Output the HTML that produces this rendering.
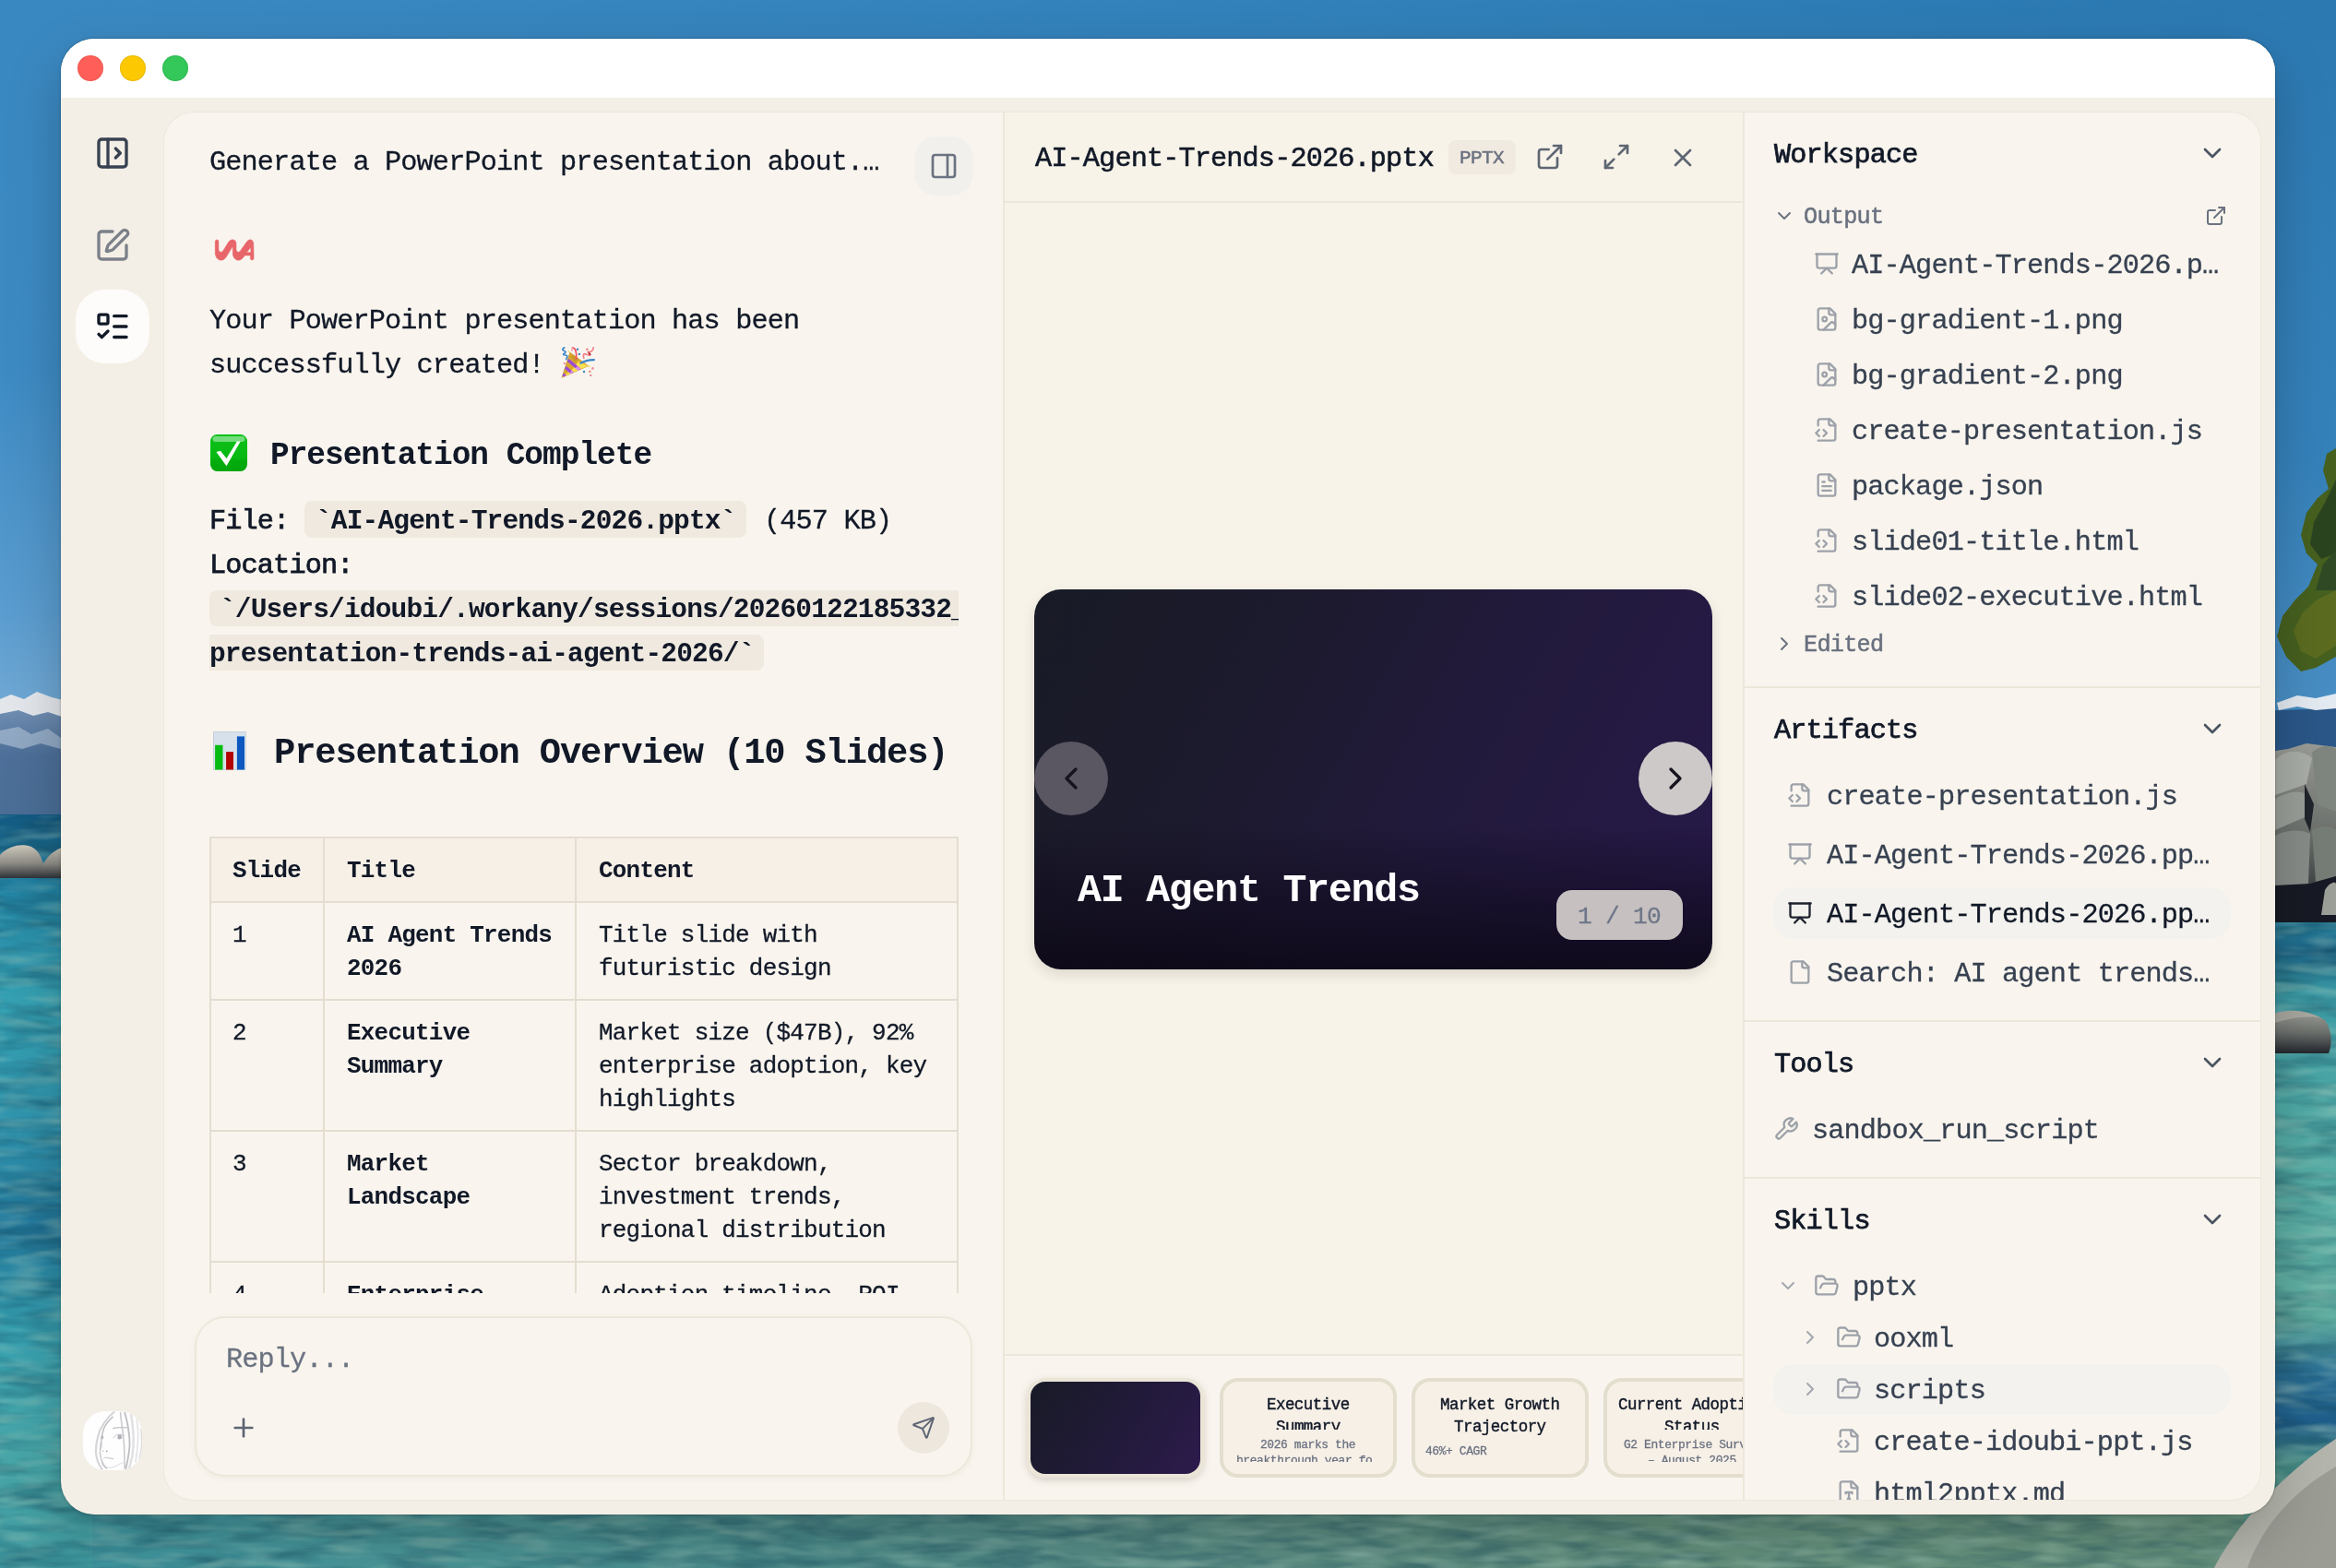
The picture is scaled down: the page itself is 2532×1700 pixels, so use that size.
<!DOCTYPE html>
<html><head><meta charset="utf-8"><title>WorkAny</title>
<style>
html,body{margin:0;padding:0;}
body{width:2532px;height:1700px;overflow:hidden;position:relative;background:#3a86bf;font-family:"Liberation Mono",monospace;}
.t{position:absolute;white-space:pre;font-family:"Liberation Mono",monospace;}
.b{position:absolute;box-sizing:border-box;}
.ic{position:absolute;overflow:visible;}
.s{position:absolute;font-family:"Liberation Sans",sans-serif;white-space:pre;}
#wall{position:absolute;left:0;top:0;width:2532px;height:1700px;background:linear-gradient(90deg,#3b88c1,#2c79b2);}
#win{background:#f4efe6;border-radius:36px;box-shadow:0 24px 60px rgba(0,0,0,.22),0 0 3px rgba(0,0,0,.3);}
#slide{border-radius:29px;background:linear-gradient(180deg,rgba(14,9,26,0) 62%,rgba(14,9,26,.55) 82%,rgba(13,9,24,.92) 100%),linear-gradient(118deg,#191b26 0%,#1c1a2d 30%,#221a3c 60%,#27194a 100%);box-shadow:0 6px 14px rgba(60,40,20,.13);}
.thumb{border-radius:20px;border:4px solid #e4decf;background:#f7f0e7;}
.thumb.sel{border:4px solid #ebe5d8;background:linear-gradient(120deg,#191b27 0%,#221a3a 55%,#2d1b4c 100%);box-shadow:0 3px 8px rgba(60,40,20,.18);border-radius:20px;}
.t{will-change:transform;}

</style></head>
<body>
<div id="wall"></div>
<svg class="ic" style="left:0;top:0" width="2532" height="1700" viewBox="0 0 2532 1700">
<defs>
<linearGradient id="skyL" x1="0" y1="0" x2="0" y2="1"><stop offset="0" stop-color="#3a88c1"/><stop offset=".45" stop-color="#3d8ac3"/><stop offset=".75" stop-color="#5a9ccf"/><stop offset="1" stop-color="#8ab6da"/></linearGradient>
<linearGradient id="skyR" x1="0" y1="0" x2="0" y2="1"><stop offset="0" stop-color="#2c79b2"/><stop offset=".6" stop-color="#3581ba"/><stop offset="1" stop-color="#4d91c6"/></linearGradient>
<linearGradient id="skyT" x1="0" y1="0" x2="1" y2="0"><stop offset="0" stop-color="#3b89c2"/><stop offset=".5" stop-color="#3382bb"/><stop offset="1" stop-color="#2b78b1"/></linearGradient>
<linearGradient id="mtn" x1="0" y1="0" x2="0" y2="1"><stop offset="0" stop-color="#7d9abb"/><stop offset=".5" stop-color="#4d6f99"/><stop offset="1" stop-color="#4a6e96"/></linearGradient>
<linearGradient id="watL" x1="0" y1="0" x2="0" y2="1"><stop offset="0" stop-color="#135c86"/><stop offset=".04" stop-color="#1a6c92"/><stop offset=".1" stop-color="#2384a4"/><stop offset=".25" stop-color="#36a2b3"/><stop offset=".42" stop-color="#2f93ad"/><stop offset=".55" stop-color="#22789c"/><stop offset=".68" stop-color="#36a0b0"/><stop offset=".85" stop-color="#48a6a8"/><stop offset="1" stop-color="#3f9aa0"/></linearGradient>
<linearGradient id="watR" x1="0" y1="0" x2="0" y2="1"><stop offset="0" stop-color="#2a86a0"/><stop offset=".06" stop-color="#1d6688"/><stop offset=".12" stop-color="#3a99a4"/><stop offset=".3" stop-color="#4faaa6"/><stop offset=".62" stop-color="#62b0a2"/><stop offset=".7" stop-color="#2a6f94"/><stop offset=".78" stop-color="#1f5f8c"/><stop offset=".84" stop-color="#4a9088"/><stop offset="1" stop-color="#5c9a84"/></linearGradient>
<linearGradient id="watB" x1="0" y1="0" x2="1" y2="0"><stop offset="0" stop-color="#3f97a1"/><stop offset=".15" stop-color="#4a9698"/><stop offset=".3" stop-color="#4a8c8c"/><stop offset=".5" stop-color="#598d85"/><stop offset=".75" stop-color="#65917d"/><stop offset="1" stop-color="#69957f"/></linearGradient>
<linearGradient id="rock" x1="0" y1="0" x2="0" y2="1"><stop offset="0" stop-color="#cfcabd"/><stop offset=".55" stop-color="#8d8c86"/><stop offset="1" stop-color="#2f3338"/></linearGradient>
<linearGradient id="rockR" x1="0" y1="0" x2="0" y2="1"><stop offset="0" stop-color="#9a9c96"/><stop offset=".5" stop-color="#6c706c"/><stop offset="1" stop-color="#23272d"/></linearGradient>
<filter id="nzd" x="0" y="0" width="100%" height="100%" color-interpolation-filters="sRGB"><feTurbulence type="fractalNoise" baseFrequency="0.014 0.07" numOctaves="3" seed="7"/><feColorMatrix values="0 0 0 0 0.08  0 0 0 0 0.28  0 0 0 0 0.36  1.9 0 0 0 -0.72"/></filter><filter id="nzl" x="0" y="0" width="100%" height="100%" color-interpolation-filters="sRGB"><feTurbulence type="fractalNoise" baseFrequency="0.02 0.09" numOctaves="2" seed="21"/><feColorMatrix values="0 0 0 0 0.66  0 0 0 0 0.8  0 0 0 0 0.74  0 1.8 0 0 -0.8"/></filter><clipPath id="wclip"><rect x="0" y="884" width="120" height="816"/><rect x="0" y="1600" width="2532" height="100"/><rect x="2412" y="1000" width="120" height="700"/></clipPath></defs>
<!-- top sky -->
<rect x="0" y="0" width="2532" height="120" fill="url(#skyT)"/>
<!-- left strip -->
<rect x="0" y="0" width="120" height="884" fill="url(#skyL)"/>
<path d="M0 762 L14 756 L30 760 L44 752 L60 758 L80 764 L120 770 L120 884 L0 884 Z" fill="url(#mtn)"/>
<path d="M0 758 L12 753 L26 758 L40 750 L56 756 L80 762 L120 768 L120 780 L70 778 L52 772 L36 776 L20 770 L0 774 Z" fill="#e3e7ec"/>
<path d="M0 792 L20 788 L34 796 L52 790 L66 800 L66 812 L44 806 L24 812 L0 806 Z" fill="#9fb4cc" opacity=".8"/>
<rect x="0" y="883" width="120" height="817" fill="url(#watL)"/>
<!-- right strip -->
<rect x="2412" y="0" width="120" height="820" fill="url(#skyR)"/>
<path d="M2412 772 L2532 768 L2532 820 L2412 820 Z" fill="#2a5788"/>
<path d="M2468 762 L2490 754 L2510 757 L2532 752 L2532 768 L2510 770 L2490 766 L2470 770 Z" fill="#e4eaf1"/>
<rect x="2412" y="990" width="120" height="710" fill="url(#watR)"/>
<!-- rocks right -->
<path d="M2412 822 L2480 812 L2500 806 L2532 810 L2532 1000 L2412 1000 Z" fill="url(#rockR)"/>
<path d="M2466 824 C2478 812 2494 812 2506 822 L2500 850 L2466 862 Z" fill="#a9ada7"/>
<path d="M2506 816 C2516 806 2528 808 2532 812 L2532 880 L2512 872 Z" fill="#7f867f"/>
<path d="M2466 866 C2480 858 2494 856 2500 862 L2498 886 L2466 900 Z" fill="#9a9e98"/>
<path d="M2466 906 C2476 900 2494 898 2504 904 L2502 958 L2466 970 Z" fill="#878c88"/>
<path d="M2506 900 C2516 894 2528 896 2532 900 L2532 950 L2510 956 Z" fill="#767d76"/>
<path d="M2498 850 L2508 872 L2504 902 L2498 888 Z" fill="#20242c"/>
<path d="M2466 960 L2504 958 L2532 950 L2532 1000 L2466 1000 Z" fill="#171a24"/>
<path d="M2520 965 C2526 955 2532 956 2532 958 L2532 992 L2516 992 Z" fill="#9c9f98"/>
<!-- tree -->
<path d="M2532 486 L2522 492 L2518 510 L2524 530 L2512 540 L2500 556 L2494 580 L2500 600 L2512 612 L2502 636 L2488 650 L2474 668 L2468 690 L2478 712 L2494 728 L2510 724 L2532 712 Z" fill="#46601f"/>
<path d="M2532 520 L2520 545 L2508 566 L2504 590 L2516 606 L2532 600 Z" fill="#2b4420"/>
<path d="M2532 640 L2512 650 L2496 664 L2486 684 L2494 706 L2510 714 L2532 700 Z" fill="#5b6c20"/>
<path d="M2532 596 L2518 612 L2510 640 L2532 640 Z" fill="#2f4a24"/>
<!-- bottom strip -->
<rect x="100" y="1630" width="2332" height="70" fill="url(#watB)"/>
<rect x="0" y="1600" width="300" height="100" fill="url(#watL)" opacity="0"/>
<g clip-path="url(#wclip)" opacity=".5"><rect x="0" y="880" width="2532" height="820" filter="url(#nzd)"/><rect x="0" y="880" width="2532" height="820" filter="url(#nzl)"/></g>
<path d="M-10 952 C-8 920 20 912 34 918 C44 923 48 936 48 946 L46 952 Z" fill="url(#rock)"/>
<path d="M42 952 C44 934 56 922 70 918 L120 918 L120 952 Z" fill="url(#rock)"/>
<path d="M2440 1142 C2440 1100 2490 1086 2520 1106 C2528 1118 2528 1132 2524 1142 Z" fill="url(#rockR)"/>
<path d="M2440 1120 C2450 1096 2490 1088 2516 1104 C2500 1100 2470 1104 2440 1120 Z" fill="#a8a8a0"/>
<!-- bottom right rock -->
<path d="M2400 1700 C2420 1660 2470 1600 2532 1560 L2532 1700 Z" fill="#9b9d95"/>
<path d="M2400 1700 C2420 1660 2470 1600 2532 1560 L2532 1590 C2480 1620 2450 1660 2436 1700 Z" fill="#b4b5ac"/>
</svg>

<div class="b" id="win" style="left:66px;top:42px;width:2400px;height:1600px;"></div>
<div class="b" style="left:66px;top:42px;width:2400px;height:64px;background:#ffffff;border-radius:0px;border-radius:36px 36px 0 0;"></div>
<div class="b" style="left:84px;top:60px;width:28px;height:28px;border-radius:50%;background:#ff5f58;box-shadow:inset 0 0 0 1px rgba(0,0,0,.08);"></div>
<div class="b" style="left:130px;top:60px;width:28px;height:28px;border-radius:50%;background:#fcc802;box-shadow:inset 0 0 0 1px rgba(0,0,0,.08);"></div>
<div class="b" style="left:176px;top:60px;width:28px;height:28px;border-radius:50%;background:#34c759;box-shadow:inset 0 0 0 1px rgba(0,0,0,.08);"></div>
<svg class="ic" style="left:102.00px;top:146.00px;" width="40" height="40" viewBox="0 0 24 24" fill="none" stroke="#374151" stroke-width="2" stroke-linecap="round" stroke-linejoin="round"><rect width="18" height="18" x="3" y="3" rx="2"/><path d="M9 3v18"/><path d="m14 9 3 3-3 3"/></svg>
<svg class="ic" style="left:102.00px;top:245.50px;" width="40" height="40" viewBox="0 0 24 24" fill="none" stroke="#7b8089" stroke-width="2" stroke-linecap="round" stroke-linejoin="round"><path d="M12 3H5a2 2 0 0 0-2 2v14a2 2 0 0 0 2 2h14a2 2 0 0 0 2-2v-7"/><path d="M18.375 2.625a1 1 0 0 1 3 3l-9.013 9.014a2 2 0 0 1-.853.505l-2.873.84a.5.5 0 0 1-.62-.62l.84-2.873a2 2 0 0 1 .506-.852z"/></svg>
<div class="b" style="left:82px;top:314px;width:80px;height:80px;background:#fdfcfa;border-radius:32px;"></div>
<svg class="ic" style="left:102.00px;top:334.00px;" width="40" height="40" viewBox="0 0 24 24" fill="none" stroke="#111827" stroke-width="2" stroke-linecap="round" stroke-linejoin="round"><rect x="3" y="4.3" width="6" height="6" rx="1"/><path d="m3 17 2 2 4-4"/><path d="M13 5.2h8"/><path d="M13 12h8"/><path d="M13 18.9h8"/></svg>
<svg class="ic" style="left:90px;top:1530px;border-radius:24px;background:#fefefe;overflow:hidden" width="64" height="64" viewBox="0 0 64 64" fill="none" stroke-linecap="round" stroke-linejoin="round"><g opacity=".72"><path d="M33.5 1 C26 7 19 17 16.6 25.7 C14.5 33 13.8 40 14 45 C14.5 52 17 58 20.5 62.8" stroke="#c6c6ca" stroke-width="2.2"/><path d="M32.2 6.2 C27 11 23.5 16 22.4 19.2 C20.5 25 20 29 19.8 32.2 C19 37 18.3 41 18.5 45.2 C19 51 20.3 55 21.8 58.2 L25.7 62.1" stroke="#9c9ca4" stroke-width="1.3"/><path d="M40.6 1.6 C41 8 42 14 42.6 19.2 C43.6 26 44.4 33 44.6 38.7 L45.2 62.1" stroke="#b9b9be" stroke-width="1.6"/><path d="M45.2 1.6 C47 8 48.4 14 49.1 19.2 C50.3 27 50.8 33 50.4 38.7 C49.8 47 48 55 46.5 62.1" stroke="#a4a4ab" stroke-width="1.8"/><path d="M52 4 C54 14 55 26 54.6 38 C54 48 52 56 50 62" stroke="#d4d4d8" stroke-width="2.4"/><path d="M58.2 9.4 C59.6 17 60 25 59.5 32.2 C59 41 58 49 56.9 55" stroke="#d9d9dc" stroke-width="1.6"/><path d="M62.8 19.2 C63.6 26 63.8 33 63.4 38.7 C63 44 62 48 60.8 51.7" stroke="#cdcdd1" stroke-width="1.4"/><path d="M32.8 18.5 C37 17.6 42 17.5 47.2 17.9" stroke="#adadb3" stroke-width="1.3"/><path d="M33.2 28.9 C34.4 26.6 36 25.6 37.4 25.4 C40 25 42.4 25.6 44.2 26.3" stroke="#a6a6ad" stroke-width="1"/><path d="M36.6 29.4 C38.6 30.6 41 30.4 43.4 28" stroke="#bdbdc2" stroke-width=".8"/><circle cx="39.7" cy="27.9" r="2.3" fill="#8e8e97" stroke="none"/><ellipse cx="20.8" cy="28.3" rx="1.3" ry="2.2" fill="#9a9aa3" stroke="none"/><circle cx="21.8" cy="43.1" r=".7" fill="#74747c" stroke="none"/><circle cx="25.7" cy="43.4" r=".8" fill="#74747c" stroke="none"/><path d="M22.8 51.1 C24 49.6 25 50.4 27 50.7 C29 51 31 51 32.8 51.7" stroke="#a9a9af" stroke-width="1"/><path d="M19.8 31.5 C20.4 34 20.6 36 20.5 38.7 C19.6 41 18.4 43 17.9 45.2 C18.6 49 20 52.6 21.8 55.6 C23 58 24.4 59.6 25.7 60.8 C28 62 31 61 34.1 60.2 C38 58 41.6 56.4 44.6 55" stroke="#cbcbcf" stroke-width=".9"/></g></svg>

<div class="b" style="left:178px;top:122px;width:2272px;height:1504px;background:#f9f5ee;border-radius:32px;box-shadow:0 0 0 1px rgba(120,100,60,.05);overflow:hidden;"></div>
<div class="b" style="left:1089px;top:122px;width:800px;height:1504px;background:#f7f3e9;border-radius:0px;"></div>
<div class="b" style="left:1087px;top:122px;width:2px;height:1504px;background:#ede7db;border-radius:0px;"></div>
<div class="b" style="left:1889px;top:122px;width:2px;height:1504px;background:#ede7db;border-radius:0px;"></div>
<div class="t " style="left:227.00px;top:158.00px;font-size:30.24px;line-height:36px;letter-spacing:-0.867px;color:#111827;font-weight:400;-webkit-text-stroke:0.3px #111827;">Generate a PowerPoint presentation about.…</div>
<div class="b" style="left:991px;top:148px;width:64px;height:64px;background:#f1f0ec;border-radius:24px;"></div>
<svg class="ic" style="left:1007.00px;top:164.00px;" width="32" height="32" viewBox="0 0 24 24" fill="none" stroke="#6b7280" stroke-width="2" stroke-linecap="round" stroke-linejoin="round"><rect width="18" height="18" x="3" y="3" rx="2"/><path d="M15 3v18"/></svg>
<svg class="ic" style="left:232px;top:258px" width="46" height="28" viewBox="0 0 46 28"><path d="M1.29 3.81 L1.81 2.44 L3.01 1.92 L4.38 2.44 L4.89 3.81 L4.89 12.71 L5.58 14.60 L7.63 15.45 L9.34 14.60 L10.37 13.05 L15.85 4.15 L17.56 2.44 L19.96 1.82 L22.36 2.44 L23.73 4.15 L23.97 6.55 L23.97 12.71 L24.58 14.60 L26.47 15.45 L28.18 14.60 L29.21 13.05 L35.37 4.15 L37.08 2.44 L39.48 1.82 L41.53 2.78 L42.73 5.18 L43.08 22.30 L42.39 23.50 L41.19 23.95 L39.99 23.50 L39.31 22.30 L39.65 18.88 L33.32 18.88 L31.60 21.27 L29.21 23.50 L26.47 24.15 L23.73 23.50 L21.50 21.27 L20.37 18.19 L20.30 9.97 L19.79 9.80 L12.77 21.27 L10.37 23.50 L7.63 24.15 L4.89 23.50 L2.66 21.27 L1.29 17.85 Z M39.89 10.14 L35.20 15.73 L39.89 15.73 Z" fill="#e8666a" fill-rule="evenodd" stroke="#e8666a" stroke-width="0.6" stroke-linejoin="round"/></svg>
<div class="t " style="left:227.00px;top:330.00px;font-size:30.24px;line-height:36px;letter-spacing:-0.867px;color:#111827;font-weight:400;-webkit-text-stroke:0.3px #111827;">Your PowerPoint presentation has been</div>
<div class="t " style="left:227.00px;top:378.00px;font-size:30.24px;line-height:36px;letter-spacing:-0.867px;color:#111827;font-weight:400;-webkit-text-stroke:0.3px #111827;">successfully created!</div>
<svg class="ic" style="left:606px;top:372px" width="42" height="42" viewBox="0 0 42 42"><defs><clipPath id="cone"><path d="M3.1 37.3 L11.9 10.2 L31.4 24.7 Z"/></clipPath></defs><path d="M3.1 37.3 L11.9 10.2 L31.4 24.7 Z" fill="#dba82d" stroke="#c4922a" stroke-width=".8" stroke-linejoin="round"/><g clip-path="url(#cone)"><path d="M21 20 L32 25 L8 38 L3 37 L14 29 Z" fill="#fae150"/><path d="M12 14 L18 12 L22 17 L17 21 Z" fill="#c99a2a"/><path d="M8.4 19.4 L10.8 17 L24 28.2 L21.6 30.6 Z" fill="#9a4bd8"/><path d="M17.5 27.5 L19.8 25 L24 28.2 L21.6 30.6 Z" fill="#dc8ff2"/><path d="M5.4 27.5 L7.8 25.1 L17 32.4 L14.6 34.8 Z" fill="#9a4bd8"/><path d="M11.5 32.4 L13.6 29.8 L17 32.4 L14.6 34.8 Z" fill="#dc8ff2"/><path d="M2.7 35 L5 32.6 L9.6 36.4 L7.4 38.6 Z" fill="#9a4bd8"/><path d="M5.6 37.2 L7.4 34.8 L9.6 36.4 L7.4 38.6 Z" fill="#dc8ff2"/></g><g fill="none" stroke-linecap="round" stroke-linejoin="round" stroke-width="1.7"><path d="M5.8 4.8 Q2.6 6.6 4.6 8 Q8.6 9 6 11 Q2.8 12.6 6.5 13 Q10.6 13.4 7.7 17.5" stroke="#3b86c8"/><path d="M14.6 4.8 Q17.6 5.6 18.2 9 L18.7 13 L18.4 17.1" stroke="#f0525f"/><path d="M14 8.2 Q13.6 5.6 14.6 4.8" stroke="#f59aa4" stroke-width="1.4"/><path d="M26.8 16.3 Q25.6 11.8 27.6 11.6 Q30 12.2 31.6 13 Q34.6 13.4 33 11" stroke="#f2808b"/><path d="M31.6 9.6 L33.6 12.6" stroke="#b5222e" stroke-width="1.8"/><path d="M32 9.6 Q36.8 9.6 37.2 4.8" stroke="#f2808b"/><path d="M23.4 21.7 Q29 18.4 37.9 18.2" stroke="#3b86c8" stroke-width="2.2"/></g><circle cx="30.3" cy="6.7" r="1.3" fill="#f0808c"/><circle cx="20" cy="6.7" r="1.2" fill="#3b86c8"/><circle cx="21.9" cy="11.9" r="1.2" fill="#3b86c8"/><circle cx="27" cy="31" r="1.2" fill="#3b86c8"/><path d="M9.6 8.4 L11.2 8 L10.8 10.6 Z" fill="#fadf4b"/><path d="M31.8 23.8 L34 25.4 L31.8 26.4 Z" fill="#fadf4b"/><circle cx="36.4" cy="27.4" r="1.3" fill="#f08a9a"/><circle cx="33.3" cy="30.7" r="1.3" fill="#ef8c7a"/><circle cx="34.3" cy="34.9" r="1.2" fill="#f08a9a"/><circle cx="5.8" cy="22" r="1.1" fill="#ef6f7f"/></svg>

<svg class="ic" style="left:228px;top:471px" width="40" height="40" viewBox="0 0 40 40"><defs><linearGradient id="gck" x1="0" y1="0" x2="0" y2="1"><stop offset="0" stop-color="#0fc21a"/><stop offset=".65" stop-color="#06b811"/><stop offset=".7" stop-color="#04ad0e"/><stop offset="1" stop-color="#03a50c"/></linearGradient></defs><rect x="0" y="0" width="40" height="40" rx="7.5" fill="url(#gck)"/><rect x="2.6" y="2" width="34.8" height="6" rx="3" fill="#8fe296" opacity=".8"/><path d="M6.4 19.1 L10.9 17.8 L17.5 26.1 L28.9 7.4 L32.7 7.4 L17.5 34.2 Z" fill="#fff"/></svg>

<div class="t " style="left:292.50px;top:473.00px;font-size:34.44px;line-height:41px;letter-spacing:-0.987px;color:#111827;font-weight:700;">Presentation Complete</div>
<div class="t " style="left:227.00px;top:547.00px;font-size:30.24px;line-height:36px;letter-spacing:-0.867px;color:#111827;font-weight:400;-webkit-text-stroke:0.75px #111827;">File:</div>
<div class="b" style="left:330px;top:543px;width:479px;height:39.5px;background:#efe9df;border-radius:8px;"></div>
<div class="t " style="left:342.00px;top:548.00px;font-size:29.54px;line-height:35px;letter-spacing:-0.849px;color:#111827;font-weight:700;">`AI-Agent-Trends-2026.pptx`</div>
<div class="t " style="left:827.50px;top:547.00px;font-size:30.24px;line-height:36px;letter-spacing:-0.867px;color:#111827;font-weight:400;-webkit-text-stroke:0.3px #111827;">(457 KB)</div>
<div class="t " style="left:227.00px;top:595.00px;font-size:30.24px;line-height:36px;letter-spacing:-0.867px;color:#111827;font-weight:400;-webkit-text-stroke:0.75px #111827;">Location:</div>
<div class="b" style="left:226.5px;top:600px;width:812.5px;height:140px;overflow:hidden;">
<div class="b" style="left:0px;top:39.5px;width:830px;height:39.0px;background:#efe9df;border-radius:0px;border-radius:8px 0 0 8px;"></div>
<div class="t " style="left:11.90px;top:44.00px;font-size:29.54px;line-height:35px;letter-spacing:-0.849px;color:#111827;font-weight:700;">`/Users/idoubi/.workany/sessions/20260122185332_</div>
<div class="b" style="left:0px;top:87.5px;width:601.0px;height:39.0px;background:#efe9df;border-radius:0px;border-radius:0 8px 8px 0;"></div>
<div class="t " style="left:0.10px;top:92.00px;font-size:29.54px;line-height:35px;letter-spacing:-0.849px;color:#111827;font-weight:700;">presentation-trends-ai-agent-2026/`</div>
</div>
<svg class="ic" style="left:231px;top:793px" width="36" height="42" viewBox="0 0 36 42"><rect x="0" y="0.3" width="35.5" height="41.5" fill="#d6e1ec"/><rect x="0.3" y="0.6" width="34.9" height="40.9" fill="none" stroke="#b9c4cf" stroke-width=".6"/><rect x="2.1" y="14.8" width="8.4" height="26.7" fill="#06bb11"/><rect x="14.1" y="22.1" width="7.9" height="19.4" fill="#b30000"/><rect x="25.9" y="5.4" width="8.1" height="36.1" fill="#0d58c0"/></svg>

<div class="t " style="left:297.00px;top:794.00px;font-size:38.74px;line-height:46px;letter-spacing:-1.108px;color:#111827;font-weight:700;">Presentation Overview (10 Slides)</div>
<div class="b" style="left:227px;top:0;width:812px;height:1402px;overflow:hidden;">
<div class="b" style="left:0px;top:908px;width:812px;height:70px;background:#f7f0e7;border-radius:0px;"></div>
<div class="b" style="left:0px;top:907px;width:812px;height:2px;background:#e4ddd0;border-radius:0px;"></div>
<div class="b" style="left:0px;top:977px;width:812px;height:2px;background:#e4ddd0;border-radius:0px;"></div>
<div class="b" style="left:0px;top:1083px;width:812px;height:2px;background:#e4ddd0;border-radius:0px;"></div>
<div class="b" style="left:0px;top:1225px;width:812px;height:2px;background:#e4ddd0;border-radius:0px;"></div>
<div class="b" style="left:0px;top:1367px;width:812px;height:2px;background:#e4ddd0;border-radius:0px;"></div>
<div class="b" style="left:0px;top:907px;width:2px;height:513px;background:#e4ddd0;border-radius:0px;"></div>
<div class="b" style="left:123px;top:907px;width:2px;height:513px;background:#e4ddd0;border-radius:0px;"></div>
<div class="b" style="left:396px;top:907px;width:2px;height:513px;background:#e4ddd0;border-radius:0px;"></div>
<div class="b" style="left:810px;top:907px;width:2px;height:513px;background:#e4ddd0;border-radius:0px;"></div>
</div>
<div class="t " style="left:252.00px;top:929.00px;font-size:25.91px;line-height:31px;letter-spacing:-0.741px;color:#111827;font-weight:700;">Slide</div>
<div class="t " style="left:376.00px;top:929.00px;font-size:25.91px;line-height:31px;letter-spacing:-0.741px;color:#111827;font-weight:700;">Title</div>
<div class="t " style="left:649.00px;top:929.00px;font-size:25.91px;line-height:31px;letter-spacing:-0.741px;color:#111827;font-weight:700;">Content</div>
<div class="t " style="left:252.00px;top:999.00px;font-size:25.91px;line-height:31px;letter-spacing:-0.741px;color:#111827;font-weight:400;-webkit-text-stroke:0.3px #111827;">1</div>
<div class="t " style="left:376.00px;top:999.00px;font-size:25.91px;line-height:31px;letter-spacing:-0.741px;color:#111827;font-weight:700;">AI Agent Trends</div>
<div class="t " style="left:376.00px;top:1035.00px;font-size:25.91px;line-height:31px;letter-spacing:-0.741px;color:#111827;font-weight:700;">2026</div>
<div class="t " style="left:649.00px;top:999.00px;font-size:25.91px;line-height:31px;letter-spacing:-0.741px;color:#111827;font-weight:400;-webkit-text-stroke:0.3px #111827;">Title slide with</div>
<div class="t " style="left:649.00px;top:1035.00px;font-size:25.91px;line-height:31px;letter-spacing:-0.741px;color:#111827;font-weight:400;-webkit-text-stroke:0.3px #111827;">futuristic design</div>
<div class="t " style="left:252.00px;top:1105.00px;font-size:25.91px;line-height:31px;letter-spacing:-0.741px;color:#111827;font-weight:400;-webkit-text-stroke:0.3px #111827;">2</div>
<div class="t " style="left:376.00px;top:1105.00px;font-size:25.91px;line-height:31px;letter-spacing:-0.741px;color:#111827;font-weight:700;">Executive</div>
<div class="t " style="left:376.00px;top:1141.00px;font-size:25.91px;line-height:31px;letter-spacing:-0.741px;color:#111827;font-weight:700;">Summary</div>
<div class="t " style="left:649.00px;top:1105.00px;font-size:25.91px;line-height:31px;letter-spacing:-0.741px;color:#111827;font-weight:400;-webkit-text-stroke:0.3px #111827;">Market size ($47B), 92%</div>
<div class="t " style="left:649.00px;top:1141.00px;font-size:25.91px;line-height:31px;letter-spacing:-0.741px;color:#111827;font-weight:400;-webkit-text-stroke:0.3px #111827;">enterprise adoption, key</div>
<div class="t " style="left:649.00px;top:1177.00px;font-size:25.91px;line-height:31px;letter-spacing:-0.741px;color:#111827;font-weight:400;-webkit-text-stroke:0.3px #111827;">highlights</div>
<div class="t " style="left:252.00px;top:1247.00px;font-size:25.91px;line-height:31px;letter-spacing:-0.741px;color:#111827;font-weight:400;-webkit-text-stroke:0.3px #111827;">3</div>
<div class="t " style="left:376.00px;top:1247.00px;font-size:25.91px;line-height:31px;letter-spacing:-0.741px;color:#111827;font-weight:700;">Market</div>
<div class="t " style="left:376.00px;top:1283.00px;font-size:25.91px;line-height:31px;letter-spacing:-0.741px;color:#111827;font-weight:700;">Landscape</div>
<div class="t " style="left:649.00px;top:1247.00px;font-size:25.91px;line-height:31px;letter-spacing:-0.741px;color:#111827;font-weight:400;-webkit-text-stroke:0.3px #111827;">Sector breakdown,</div>
<div class="t " style="left:649.00px;top:1283.00px;font-size:25.91px;line-height:31px;letter-spacing:-0.741px;color:#111827;font-weight:400;-webkit-text-stroke:0.3px #111827;">investment trends,</div>
<div class="t " style="left:649.00px;top:1319.00px;font-size:25.91px;line-height:31px;letter-spacing:-0.741px;color:#111827;font-weight:400;-webkit-text-stroke:0.3px #111827;">regional distribution</div>
<div class="b" style="left:227px;top:1380px;width:812px;height:22px;overflow:hidden;">
<div class="t " style="left:25.00px;top:9.00px;font-size:25.91px;line-height:31px;letter-spacing:-0.741px;color:#111827;font-weight:400;-webkit-text-stroke:0.3px #111827;">4</div>
<div class="t " style="left:149.00px;top:9.00px;font-size:25.91px;line-height:31px;letter-spacing:-0.741px;color:#111827;font-weight:700;">Enterprise</div>
<div class="t " style="left:422.00px;top:9.00px;font-size:25.91px;line-height:31px;letter-spacing:-0.741px;color:#111827;font-weight:400;-webkit-text-stroke:0.3px #111827;">Adoption timeline, ROI</div>
</div>
<div class="b" style="left:211px;top:1426.5px;width:843px;height:174.5px;background:#f9f5ee;border-radius:34px;border:2px solid #ede7db;box-shadow:0 2px 6px rgba(90,70,30,.06);"></div>
<div class="t " style="left:245.00px;top:1456.00px;font-size:30.24px;line-height:36px;letter-spacing:-0.867px;color:#6b7280;font-weight:400;-webkit-text-stroke:0.3px #6b7280;">Reply...</div>
<svg class="ic" style="left:248.00px;top:1532.00px;" width="32" height="32" viewBox="0 0 24 24" fill="none" stroke="#5d6474" stroke-width="2" stroke-linecap="round" stroke-linejoin="round"><path d="M5 12h14"/><path d="M12 5v14"/></svg>
<div class="b" style="left:973px;top:1520px;width:56px;height:56px;background:#ede7dd;border-radius:28px;"></div>
<svg class="ic" style="left:987.50px;top:1535.00px;" width="26" height="26" viewBox="0 0 24 24" fill="none" stroke="#5d6474" stroke-width="1.8" stroke-linecap="round" stroke-linejoin="round"><path d="M14.536 21.686a.5.5 0 0 0 .937-.024l6.5-19a.496.496 0 0 0-.635-.635l-19 6.5a.5.5 0 0 0-.024.937l7.93 3.18a2 2 0 0 1 1.112 1.11z"/><path d="m21.854 2.147-10.94 10.939"/></svg>
<div class="t " style="left:1121.50px;top:154.00px;font-size:30.24px;line-height:36px;letter-spacing:-0.867px;color:#111827;font-weight:400;-webkit-text-stroke:0.55px #111827;">AI-Agent-Trends-2026.pptx</div>
<div class="b" style="left:1570px;top:151.5px;width:73px;height:37.0px;background:#f1eae0;border-radius:8px;"></div>
<div class="t " style="left:1582.00px;top:159.00px;font-size:21.00px;line-height:25px;letter-spacing:-0.602px;color:#6b7280;font-weight:400;-webkit-text-stroke:0.5px #6b7280;">PPTX</div>
<svg class="ic" style="left:1664.00px;top:154.00px;" width="32" height="32" viewBox="0 0 24 24" fill="none" stroke="#5f6673" stroke-width="2" stroke-linecap="round" stroke-linejoin="round"><path d="M15 3h6v6"/><path d="M10 14 21 3"/><path d="M18 13v6a2 2 0 0 1-2 2H5a2 2 0 0 1-2-2V8a2 2 0 0 1 2-2h6"/></svg>
<svg class="ic" style="left:1736.30px;top:154.00px;" width="32" height="32" viewBox="0 0 24 24" fill="none" stroke="#5f6673" stroke-width="2" stroke-linecap="round" stroke-linejoin="round"><polyline points="15 3 21 3 21 9"/><polyline points="9 21 3 21 3 15"/><line x1="21" x2="14" y1="3" y2="10"/><line x1="3" x2="10" y1="21" y2="14"/></svg>
<svg class="ic" style="left:1808.00px;top:154.50px;" width="32" height="32" viewBox="0 0 24 24" fill="none" stroke="#5f6673" stroke-width="2" stroke-linecap="round" stroke-linejoin="round"><path d="M18 6 6 18"/><path d="m6 6 12 12"/></svg>
<div class="b" style="left:1089px;top:218px;width:800px;height:2px;background:#ede7db;border-radius:0px;"></div>
<div class="b" id="slide" style="left:1121px;top:639px;width:735px;height:412px;"></div>
<div class="t " style="left:1168.00px;top:940.00px;font-size:43.26px;line-height:52px;letter-spacing:-1.240px;color:#ffffff;font-weight:700;">AI Agent Trends</div>
<div class="b" style="left:1687px;top:965px;width:137px;height:54px;background:#c6c1c0;border-radius:17px;"></div>
<div class="t " style="left:1710.00px;top:978.00px;font-size:26.25px;line-height:32px;letter-spacing:-0.753px;color:#6e7689;font-weight:400;-webkit-text-stroke:0.3px #6e7689;">1 / 10</div>
<div class="b" style="left:1121px;top:804px;width:80px;height:80px;background:#5a5662;border-radius:40px;"></div>
<svg class="ic" style="left:1140.50px;top:823.70px;" width="40" height="40" viewBox="0 0 24 24" fill="none" stroke="#16131f" stroke-width="2" stroke-linecap="round" stroke-linejoin="round"><path d="m15 18-6-6 6-6"/></svg>
<div class="b" style="left:1776px;top:804px;width:80px;height:80px;background:#cdc9c8;border-radius:40px;"></div>
<svg class="ic" style="left:1796.30px;top:823.70px;" width="40" height="40" viewBox="0 0 24 24" fill="none" stroke="#16131f" stroke-width="2" stroke-linecap="round" stroke-linejoin="round"><path d="m9 18 6-6-6-6"/></svg>
<div class="b" style="left:1089px;top:1470px;width:800px;height:156px;background:#f9f5ee;border-radius:0px;"></div>
<div class="b" style="left:1089px;top:1468px;width:800px;height:2px;background:#ede7db;border-radius:0px;"></div>
<div class="b" style="left:1089px;top:1470px;width:800px;height:156px;overflow:hidden;">
<div class="b thumb sel" style="left:24px;top:24px;width:192px;height:108px;"></div>
<div class="b thumb" style="left:232.5px;top:24px;width:192px;height:108px;"></div>
<div class="b thumb" style="left:440.5px;top:24px;width:192px;height:108px;"></div>
<div class="b thumb" style="left:648.5px;top:24px;width:192px;height:108px;"></div>
<div class="t " style="left:283.68px;top:43.00px;font-size:17.43px;line-height:21px;letter-spacing:-0.500px;color:#111827;font-weight:400;-webkit-text-stroke:0.43px #111827;">Executive</div>
<div class="b" style="left:228.5px;top:40px;width:200px;height:40px;overflow:hidden;">
<div class="t " style="left:65.14px;top:26.50px;font-size:17.43px;line-height:21px;letter-spacing:-0.500px;color:#111827;font-weight:400;-webkit-text-stroke:0.43px #111827;">Summary</div>
</div>
<div class="t " style="left:276.84px;top:89.00px;font-size:12.92px;line-height:16px;letter-spacing:-0.373px;color:#6b7280;font-weight:400;-webkit-text-stroke:0.3px #6b7280;">2026 marks the</div>
<div class="b" style="left:228.5px;top:75px;width:200px;height:40px;overflow:hidden;">
<div class="t " style="left:22.51px;top:31.00px;font-size:12.92px;line-height:16px;letter-spacing:-0.373px;color:#6b7280;font-weight:400;-webkit-text-stroke:0.3px #6b7280;">breakthrough year fo…</div>
</div>
<div class="t " style="left:471.76px;top:43.00px;font-size:17.43px;line-height:21px;letter-spacing:-0.500px;color:#111827;font-weight:400;-webkit-text-stroke:0.43px #111827;">Market Growth</div>
<div class="b" style="left:436.5px;top:46px;width:200px;height:40px;overflow:hidden;">
<div class="t " style="left:50.20px;top:20.50px;font-size:17.43px;line-height:21px;letter-spacing:-0.500px;color:#111827;font-weight:400;-webkit-text-stroke:0.43px #111827;">Trajectory</div>
</div>
<div class="t " style="left:456.00px;top:96.00px;font-size:12.92px;line-height:16px;letter-spacing:-0.373px;color:#6b7280;font-weight:400;-webkit-text-stroke:0.3px #6b7280;">46%+ CAGR</div>
<div class="t " style="left:664.82px;top:43.00px;font-size:17.43px;line-height:21px;letter-spacing:-0.500px;color:#111827;font-weight:400;-webkit-text-stroke:0.43px #111827;">Current Adoption</div>
<div class="b" style="left:644.5px;top:40px;width:200px;height:40px;overflow:hidden;">
<div class="t " style="left:70.12px;top:26.50px;font-size:17.43px;line-height:21px;letter-spacing:-0.500px;color:#111827;font-weight:400;-webkit-text-stroke:0.43px #111827;">Status</div>
</div>
<div class="t " style="left:670.70px;top:89.00px;font-size:12.92px;line-height:16px;letter-spacing:-0.373px;color:#6b7280;font-weight:400;-webkit-text-stroke:0.3px #6b7280;">G2 Enterprise Survey</div>
<div class="b" style="left:644.5px;top:75px;width:200px;height:40px;overflow:hidden;">
<div class="t " style="left:52.03px;top:31.00px;font-size:12.92px;line-height:16px;letter-spacing:-0.373px;color:#6b7280;font-weight:400;-webkit-text-stroke:0.3px #6b7280;">– August 2025</div>
</div>
</div>
<div class="t " style="left:1922.50px;top:150.00px;font-size:30.24px;line-height:36px;letter-spacing:-0.867px;color:#111827;font-weight:400;-webkit-text-stroke:0.75px #111827;">Workspace</div>
<svg class="ic" style="left:2382.00px;top:150.00px;" width="32" height="32" viewBox="0 0 24 24" fill="none" stroke="#4b5563" stroke-width="2" stroke-linecap="round" stroke-linejoin="round"><path d="m6 9 6 6 6-6"/></svg>
<svg class="ic" style="left:1922.00px;top:222.00px;" width="24" height="24" viewBox="0 0 24 24" fill="none" stroke="#6b7280" stroke-width="2" stroke-linecap="round" stroke-linejoin="round"><path d="m6 9 6 6 6-6"/></svg>
<div class="t " style="left:1955.00px;top:221.00px;font-size:25.20px;line-height:30px;letter-spacing:-0.723px;color:#69707f;font-weight:400;-webkit-text-stroke:0.5px #69707f;">Output</div>
<svg class="ic" style="left:2390.00px;top:222.00px;" width="24" height="24" viewBox="0 0 24 24" fill="none" stroke="#6b7280" stroke-width="2" stroke-linecap="round" stroke-linejoin="round"><path d="M15 3h6v6"/><path d="M10 14 21 3"/><path d="M18 13v6a2 2 0 0 1-2 2H5a2 2 0 0 1-2-2V8a2 2 0 0 1 2-2h6"/></svg>
<svg class="ic" style="left:1966.00px;top:272.00px;" width="28" height="28" viewBox="0 0 24 24" fill="none" stroke="#9da1a9" stroke-width="2" stroke-linecap="round" stroke-linejoin="round"><path d="M2 3h20"/><path d="M21 3v11a2 2 0 0 1-2 2H5a2 2 0 0 1-2-2V3"/><path d="m7 21 5-5 5 5"/></svg>
<div class="t " style="left:2007.00px;top:270.00px;font-size:30.24px;line-height:36px;letter-spacing:-0.867px;color:#374151;font-weight:400;-webkit-text-stroke:0.3px #374151;">AI-Agent-Trends-2026.p…</div>
<svg class="ic" style="left:1966.00px;top:332.00px;" width="28" height="28" viewBox="0 0 24 24" fill="none" stroke="#9da1a9" stroke-width="2" stroke-linecap="round" stroke-linejoin="round"><path d="M15 2H6a2 2 0 0 0-2 2v16a2 2 0 0 0 2 2h12a2 2 0 0 0 2-2V7Z"/><path d="M14 2v4a2 2 0 0 0 2 2h4"/><circle cx="10" cy="12" r="2"/><path d="m20 17-1.296-1.296a2.41 2.41 0 0 0-3.408 0L9 22"/></svg>
<div class="t " style="left:2007.00px;top:330.00px;font-size:30.24px;line-height:36px;letter-spacing:-0.867px;color:#374151;font-weight:400;-webkit-text-stroke:0.3px #374151;">bg-gradient-1.png</div>
<svg class="ic" style="left:1966.00px;top:392.00px;" width="28" height="28" viewBox="0 0 24 24" fill="none" stroke="#9da1a9" stroke-width="2" stroke-linecap="round" stroke-linejoin="round"><path d="M15 2H6a2 2 0 0 0-2 2v16a2 2 0 0 0 2 2h12a2 2 0 0 0 2-2V7Z"/><path d="M14 2v4a2 2 0 0 0 2 2h4"/><circle cx="10" cy="12" r="2"/><path d="m20 17-1.296-1.296a2.41 2.41 0 0 0-3.408 0L9 22"/></svg>
<div class="t " style="left:2007.00px;top:390.00px;font-size:30.24px;line-height:36px;letter-spacing:-0.867px;color:#374151;font-weight:400;-webkit-text-stroke:0.3px #374151;">bg-gradient-2.png</div>
<svg class="ic" style="left:1966.00px;top:452.00px;" width="28" height="28" viewBox="0 0 24 24" fill="none" stroke="#9da1a9" stroke-width="2" stroke-linecap="round" stroke-linejoin="round"><path d="M4 22h14a2 2 0 0 0 2-2V7l-5-5H6a2 2 0 0 0-2 2v4"/><path d="M14 2v4a2 2 0 0 0 2 2h4"/><path d="m5 12-3 3 3 3"/><path d="m9 18 3-3-3-3"/></svg>
<div class="t " style="left:2007.00px;top:450.00px;font-size:30.24px;line-height:36px;letter-spacing:-0.867px;color:#374151;font-weight:400;-webkit-text-stroke:0.3px #374151;">create-presentation.js</div>
<svg class="ic" style="left:1966.00px;top:512.00px;" width="28" height="28" viewBox="0 0 24 24" fill="none" stroke="#9da1a9" stroke-width="2" stroke-linecap="round" stroke-linejoin="round"><path d="M15 2H6a2 2 0 0 0-2 2v16a2 2 0 0 0 2 2h12a2 2 0 0 0 2-2V7Z"/><path d="M14 2v4a2 2 0 0 0 2 2h4"/><path d="M10 9H8"/><path d="M16 13H8"/><path d="M16 17H8"/></svg>
<div class="t " style="left:2007.00px;top:510.00px;font-size:30.24px;line-height:36px;letter-spacing:-0.867px;color:#374151;font-weight:400;-webkit-text-stroke:0.3px #374151;">package.json</div>
<svg class="ic" style="left:1966.00px;top:572.00px;" width="28" height="28" viewBox="0 0 24 24" fill="none" stroke="#9da1a9" stroke-width="2" stroke-linecap="round" stroke-linejoin="round"><path d="M4 22h14a2 2 0 0 0 2-2V7l-5-5H6a2 2 0 0 0-2 2v4"/><path d="M14 2v4a2 2 0 0 0 2 2h4"/><path d="m5 12-3 3 3 3"/><path d="m9 18 3-3-3-3"/></svg>
<div class="t " style="left:2007.00px;top:570.00px;font-size:30.24px;line-height:36px;letter-spacing:-0.867px;color:#374151;font-weight:400;-webkit-text-stroke:0.3px #374151;">slide01-title.html</div>
<svg class="ic" style="left:1966.00px;top:632.00px;" width="28" height="28" viewBox="0 0 24 24" fill="none" stroke="#9da1a9" stroke-width="2" stroke-linecap="round" stroke-linejoin="round"><path d="M4 22h14a2 2 0 0 0 2-2V7l-5-5H6a2 2 0 0 0-2 2v4"/><path d="M14 2v4a2 2 0 0 0 2 2h4"/><path d="m5 12-3 3 3 3"/><path d="m9 18 3-3-3-3"/></svg>
<div class="t " style="left:2007.00px;top:630.00px;font-size:30.24px;line-height:36px;letter-spacing:-0.867px;color:#374151;font-weight:400;-webkit-text-stroke:0.3px #374151;">slide02-executive.html</div>
<svg class="ic" style="left:1922.00px;top:686.00px;" width="24" height="24" viewBox="0 0 24 24" fill="none" stroke="#6b7280" stroke-width="2" stroke-linecap="round" stroke-linejoin="round"><path d="m9 18 6-6-6-6"/></svg>
<div class="t " style="left:1955.00px;top:685.00px;font-size:25.20px;line-height:30px;letter-spacing:-0.723px;color:#69707f;font-weight:400;-webkit-text-stroke:0.5px #69707f;">Edited</div>
<div class="b" style="left:1891px;top:744px;width:559px;height:2px;background:#ede7db;border-radius:0px;"></div>
<div class="t " style="left:1922.50px;top:774.00px;font-size:30.24px;line-height:36px;letter-spacing:-0.867px;color:#111827;font-weight:400;-webkit-text-stroke:0.75px #111827;">Artifacts</div>
<svg class="ic" style="left:2382.00px;top:774.00px;" width="32" height="32" viewBox="0 0 24 24" fill="none" stroke="#4b5563" stroke-width="2" stroke-linecap="round" stroke-linejoin="round"><path d="m6 9 6 6 6-6"/></svg>
<svg class="ic" style="left:1937.00px;top:848.00px;" width="28" height="28" viewBox="0 0 24 24" fill="none" stroke="#9da1a9" stroke-width="2" stroke-linecap="round" stroke-linejoin="round"><path d="M4 22h14a2 2 0 0 0 2-2V7l-5-5H6a2 2 0 0 0-2 2v4"/><path d="M14 2v4a2 2 0 0 0 2 2h4"/><path d="m5 12-3 3 3 3"/><path d="m9 18 3-3-3-3"/></svg>
<div class="t " style="left:1979.50px;top:846.00px;font-size:30.24px;line-height:36px;letter-spacing:-0.867px;color:#374151;font-weight:400;-webkit-text-stroke:0.3px #374151;">create-presentation.js</div>
<svg class="ic" style="left:1937.00px;top:912.00px;" width="28" height="28" viewBox="0 0 24 24" fill="none" stroke="#9da1a9" stroke-width="2" stroke-linecap="round" stroke-linejoin="round"><path d="M2 3h20"/><path d="M21 3v11a2 2 0 0 1-2 2H5a2 2 0 0 1-2-2V3"/><path d="m7 21 5-5 5 5"/></svg>
<div class="t " style="left:1979.50px;top:910.00px;font-size:30.24px;line-height:36px;letter-spacing:-0.867px;color:#374151;font-weight:400;-webkit-text-stroke:0.3px #374151;">AI-Agent-Trends-2026.pp…</div>
<div class="b" style="left:1922px;top:962px;width:496px;height:56px;background:#f3f2ee;border-radius:22px;"></div>
<svg class="ic" style="left:1937.00px;top:976.00px;" width="28" height="28" viewBox="0 0 24 24" fill="none" stroke="#1f2430" stroke-width="2" stroke-linecap="round" stroke-linejoin="round"><path d="M2 3h20"/><path d="M21 3v11a2 2 0 0 1-2 2H5a2 2 0 0 1-2-2V3"/><path d="m7 21 5-5 5 5"/></svg>
<div class="t " style="left:1979.50px;top:974.00px;font-size:30.24px;line-height:36px;letter-spacing:-0.867px;color:#111827;font-weight:400;-webkit-text-stroke:0.3px #111827;">AI-Agent-Trends-2026.pp…</div>
<svg class="ic" style="left:1937.00px;top:1040.00px;" width="28" height="28" viewBox="0 0 24 24" fill="none" stroke="#9da1a9" stroke-width="2" stroke-linecap="round" stroke-linejoin="round"><path d="M15 2H6a2 2 0 0 0-2 2v16a2 2 0 0 0 2 2h12a2 2 0 0 0 2-2V7Z"/><path d="M14 2v4a2 2 0 0 0 2 2h4"/></svg>
<div class="t " style="left:1979.50px;top:1038.00px;font-size:30.24px;line-height:36px;letter-spacing:-0.867px;color:#374151;font-weight:400;-webkit-text-stroke:0.3px #374151;">Search: AI agent trends…</div>
<div class="b" style="left:1891px;top:1106px;width:559px;height:2px;background:#ede7db;border-radius:0px;"></div>
<div class="t " style="left:1922.50px;top:1136.00px;font-size:30.24px;line-height:36px;letter-spacing:-0.867px;color:#111827;font-weight:400;-webkit-text-stroke:0.75px #111827;">Tools</div>
<svg class="ic" style="left:2382.00px;top:1136.00px;" width="32" height="32" viewBox="0 0 24 24" fill="none" stroke="#4b5563" stroke-width="2" stroke-linecap="round" stroke-linejoin="round"><path d="m6 9 6 6 6-6"/></svg>
<svg class="ic" style="left:1922.00px;top:1210.00px;" width="28" height="28" viewBox="0 0 24 24" fill="none" stroke="#9da1a9" stroke-width="2" stroke-linecap="round" stroke-linejoin="round"><path d="M14.7 6.3a1 1 0 0 0 0 1.4l1.6 1.6a1 1 0 0 0 1.4 0l3.77-3.77a6 6 0 0 1-7.94 7.94l-6.91 6.91a2.12 2.12 0 0 1-3-3l6.91-6.91a6 6 0 0 1 7.94-7.94l-3.76 3.76z"/></svg>
<div class="t " style="left:1963.50px;top:1208.00px;font-size:30.24px;line-height:36px;letter-spacing:-0.867px;color:#374151;font-weight:400;-webkit-text-stroke:0.3px #374151;">sandbox_run_script</div>
<div class="b" style="left:1891px;top:1276px;width:559px;height:2px;background:#ede7db;border-radius:0px;"></div>
<div class="t " style="left:1922.50px;top:1306.00px;font-size:30.24px;line-height:36px;letter-spacing:-0.867px;color:#111827;font-weight:400;-webkit-text-stroke:0.75px #111827;">Skills</div>
<svg class="ic" style="left:2382.00px;top:1306.00px;" width="32" height="32" viewBox="0 0 24 24" fill="none" stroke="#4b5563" stroke-width="2" stroke-linecap="round" stroke-linejoin="round"><path d="m6 9 6 6 6-6"/></svg>
<div class="b" style="left:1891px;top:1340px;width:559px;height:286px;overflow:hidden;">
<svg class="ic" style="left:35.00px;top:42.00px;" width="24" height="24" viewBox="0 0 24 24" fill="none" stroke="#a3a7af" stroke-width="2" stroke-linecap="round" stroke-linejoin="round"><path d="m6 9 6 6 6-6"/></svg>
<svg class="ic" style="left:74.50px;top:39.50px;" width="28" height="28" viewBox="0 0 24 24" fill="none" stroke="#9da1a9" stroke-width="2" stroke-linecap="round" stroke-linejoin="round"><path d="m6 14 1.5-2.9A2 2 0 0 1 9.24 10H20a2 2 0 0 1 1.94 2.5l-1.54 6a2 2 0 0 1-1.95 1.5H4a2 2 0 0 1-2-2V5a2 2 0 0 1 2-2h3.9a2 2 0 0 1 1.69.9l.81 1.2a2 2 0 0 0 1.67.9H18a2 2 0 0 1 2 2v2"/></svg>
<div class="t " style="left:116.50px;top:38.00px;font-size:30.24px;line-height:36px;letter-spacing:-0.867px;color:#374151;font-weight:400;-webkit-text-stroke:0.3px #374151;">pptx</div>
<svg class="ic" style="left:59.00px;top:98.00px;" width="24" height="24" viewBox="0 0 24 24" fill="none" stroke="#a3a7af" stroke-width="2" stroke-linecap="round" stroke-linejoin="round"><path d="m9 18 6-6-6-6"/></svg>
<svg class="ic" style="left:99.00px;top:95.50px;" width="28" height="28" viewBox="0 0 24 24" fill="none" stroke="#9da1a9" stroke-width="2" stroke-linecap="round" stroke-linejoin="round"><path d="m6 14 1.5-2.9A2 2 0 0 1 9.24 10H20a2 2 0 0 1 1.94 2.5l-1.54 6a2 2 0 0 1-1.95 1.5H4a2 2 0 0 1-2-2V5a2 2 0 0 1 2-2h3.9a2 2 0 0 1 1.69.9l.81 1.2a2 2 0 0 0 1.67.9H18a2 2 0 0 1 2 2v2"/></svg>
<div class="t " style="left:140.30px;top:94.00px;font-size:30.24px;line-height:36px;letter-spacing:-0.867px;color:#374151;font-weight:400;-webkit-text-stroke:0.3px #374151;">ooxml</div>
<div class="b" style="left:31px;top:138.5px;width:496px;height:55.5px;background:#f3f2ee;border-radius:22px;"></div>
<svg class="ic" style="left:59.00px;top:154.00px;" width="24" height="24" viewBox="0 0 24 24" fill="none" stroke="#a3a7af" stroke-width="2" stroke-linecap="round" stroke-linejoin="round"><path d="m9 18 6-6-6-6"/></svg>
<svg class="ic" style="left:99.00px;top:151.50px;" width="28" height="28" viewBox="0 0 24 24" fill="none" stroke="#9da1a9" stroke-width="2" stroke-linecap="round" stroke-linejoin="round"><path d="m6 14 1.5-2.9A2 2 0 0 1 9.24 10H20a2 2 0 0 1 1.94 2.5l-1.54 6a2 2 0 0 1-1.95 1.5H4a2 2 0 0 1-2-2V5a2 2 0 0 1 2-2h3.9a2 2 0 0 1 1.69.9l.81 1.2a2 2 0 0 0 1.67.9H18a2 2 0 0 1 2 2v2"/></svg>
<div class="t " style="left:140.30px;top:150.00px;font-size:30.24px;line-height:36px;letter-spacing:-0.867px;color:#374151;font-weight:400;-webkit-text-stroke:0.3px #374151;">scripts</div>
<svg class="ic" style="left:99.00px;top:208.00px;" width="28" height="28" viewBox="0 0 24 24" fill="none" stroke="#9da1a9" stroke-width="2" stroke-linecap="round" stroke-linejoin="round"><path d="M4 22h14a2 2 0 0 0 2-2V7l-5-5H6a2 2 0 0 0-2 2v4"/><path d="M14 2v4a2 2 0 0 0 2 2h4"/><path d="m5 12-3 3 3 3"/><path d="m9 18 3-3-3-3"/></svg>
<div class="t " style="left:140.30px;top:206.00px;font-size:30.24px;line-height:36px;letter-spacing:-0.867px;color:#374151;font-weight:400;-webkit-text-stroke:0.3px #374151;">create-idoubi-ppt.js</div>
<svg class="ic" style="left:99.00px;top:264.00px;" width="28" height="28" viewBox="0 0 24 24" fill="none" stroke="#9da1a9" stroke-width="2" stroke-linecap="round" stroke-linejoin="round"><path d="M15 2H6a2 2 0 0 0-2 2v16a2 2 0 0 0 2 2h12a2 2 0 0 0 2-2V7Z"/><path d="M14 2v4a2 2 0 0 0 2 2h4"/><path d="M9 13v-1h6v1"/><path d="M12 12v6"/><path d="M11 18h2"/></svg>
<div class="t " style="left:140.30px;top:262.00px;font-size:30.24px;line-height:36px;letter-spacing:-0.867px;color:#374151;font-weight:400;-webkit-text-stroke:0.3px #374151;">html2pptx.md</div>
</div>
</body></html>
